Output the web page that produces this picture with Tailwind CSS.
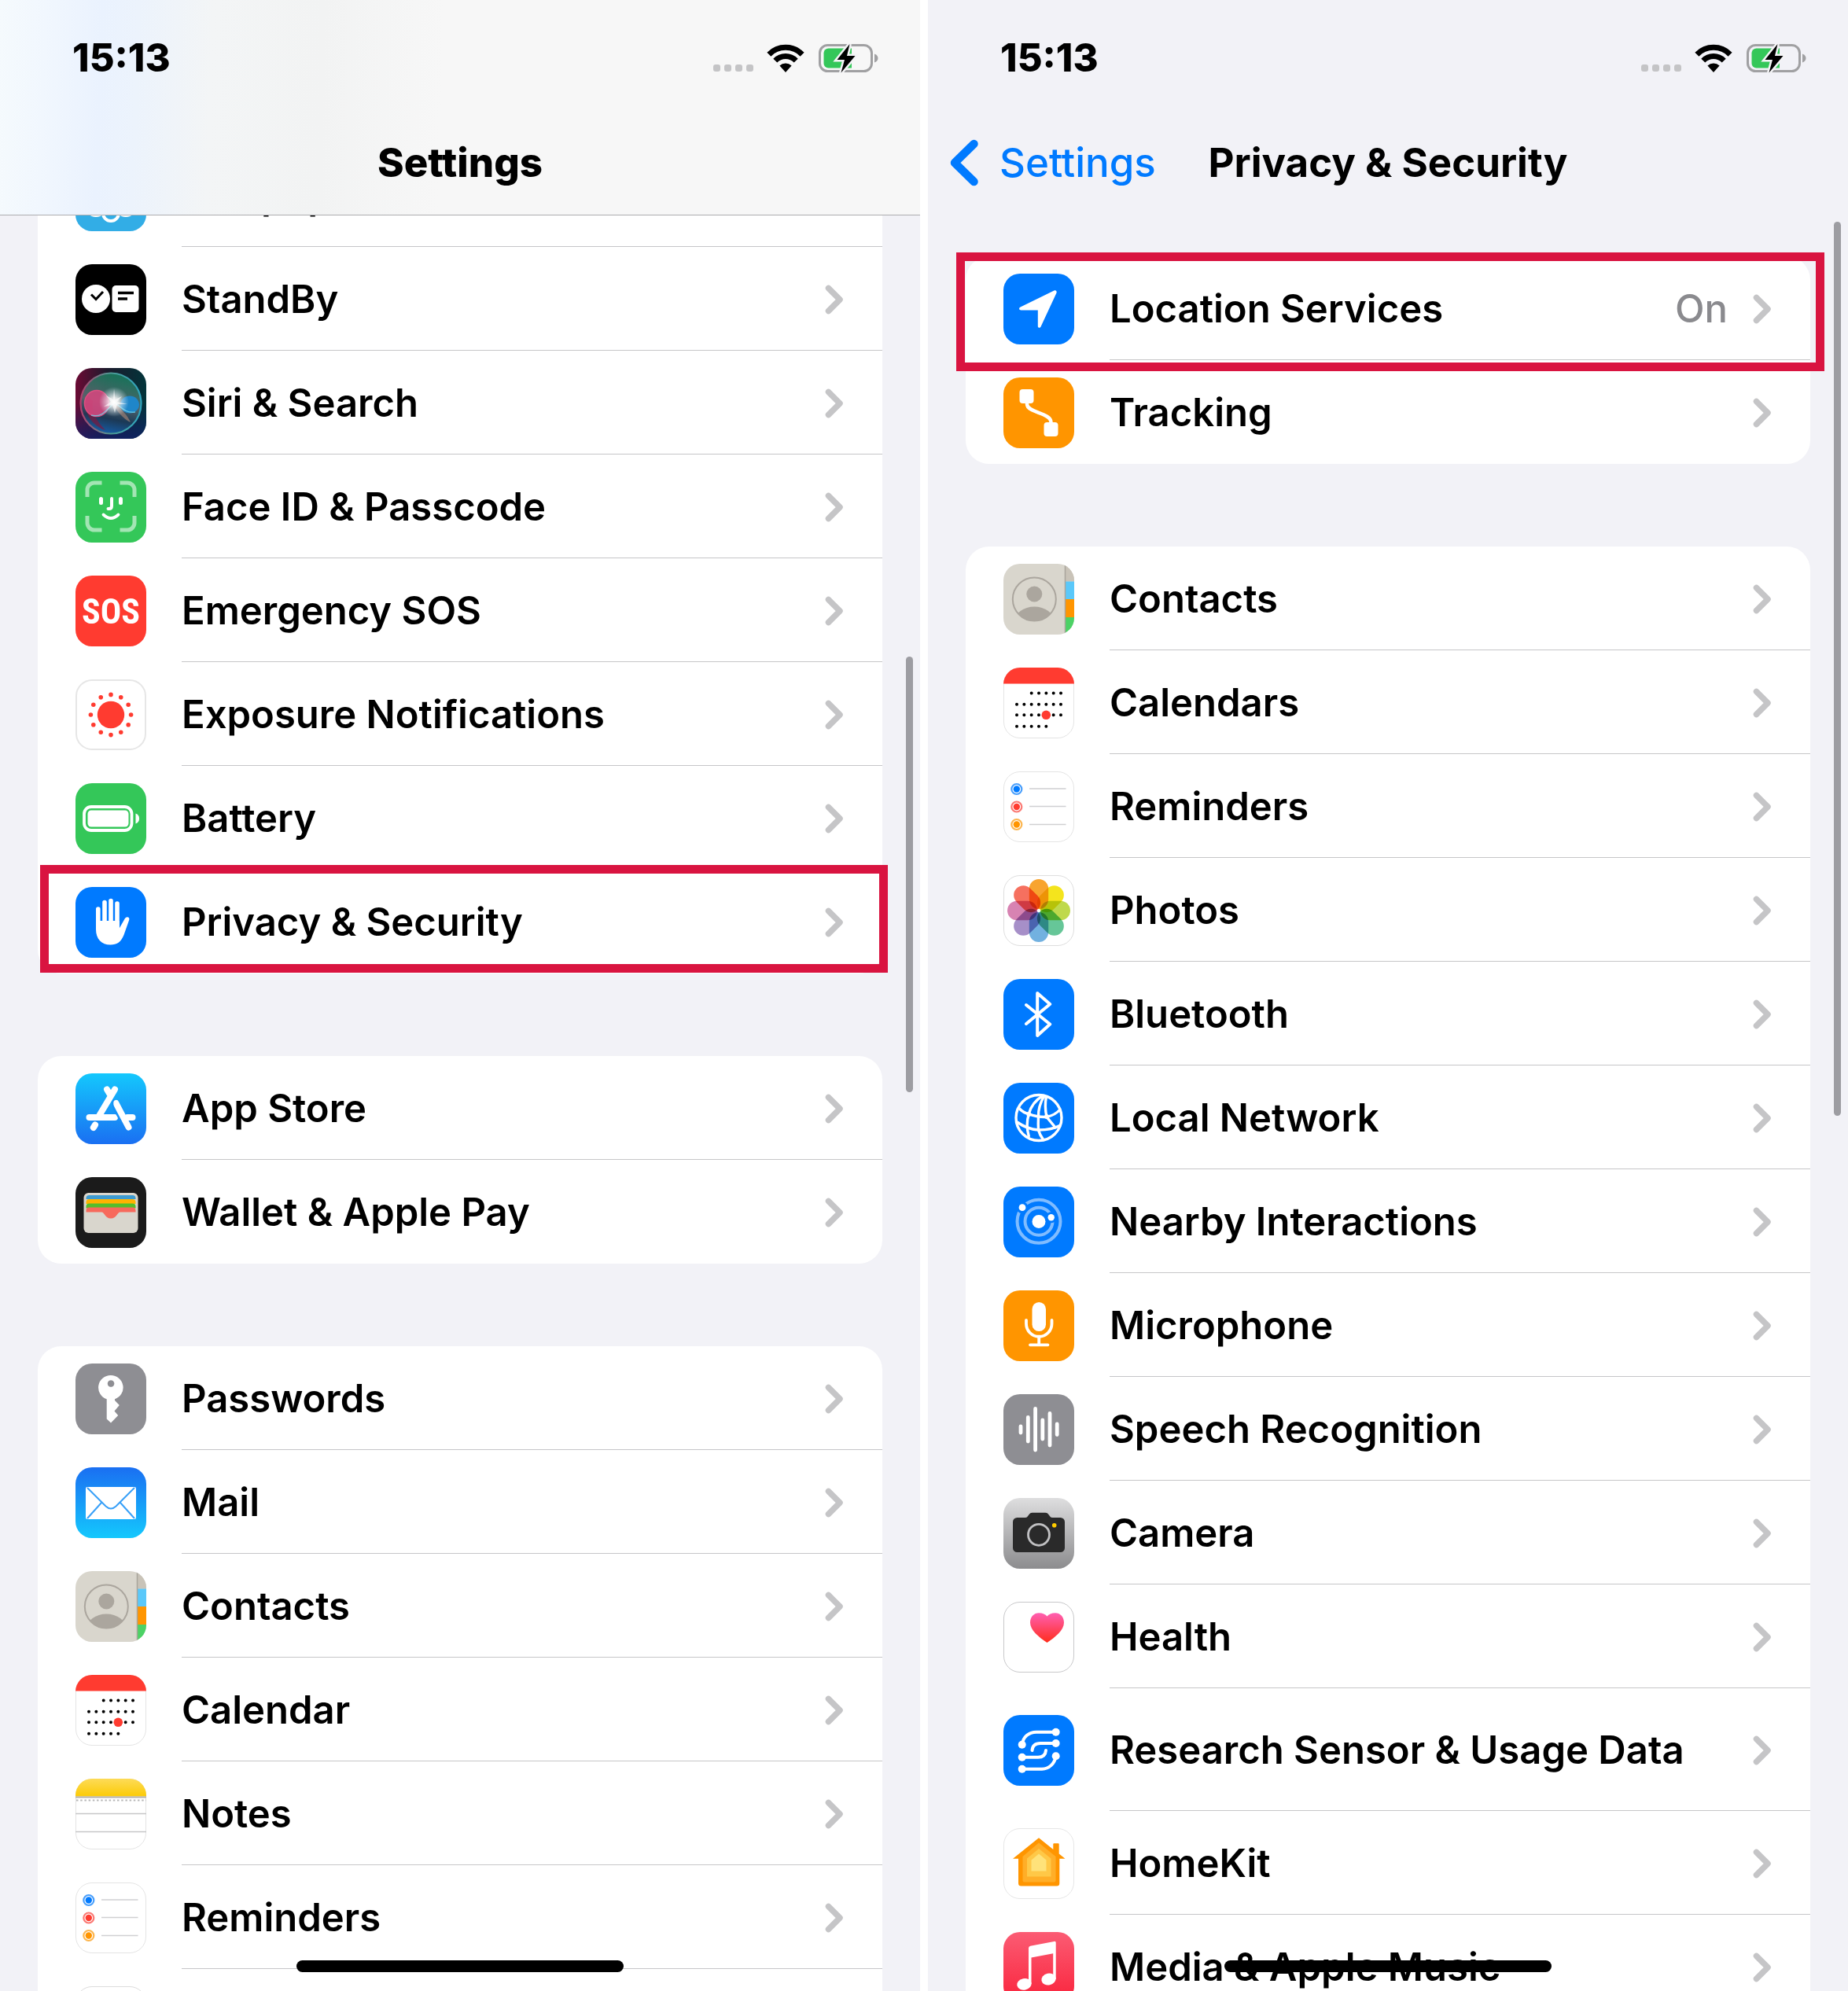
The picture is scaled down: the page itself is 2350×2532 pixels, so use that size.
<!DOCTYPE html>
<html lang="en">
<head>
  <meta charset="UTF-8">
  <meta name="viewport" content="width=device-width, initial-scale=1.0">
  <title>Settings</title>
  <script src="https://cdn.jsdelivr.net/npm/@tailwindcss/browser@4"></script>
</head>
<body class="bg-white font-['Inter','Liberation_Sans',sans-serif] text-black">

  <!-- Icon sprite, every app icon is drawn on a 90x90 tile -->
  <svg class="absolute h-0 w-0" aria-hidden="true">
    <defs>
      <clipPath id="tile"><rect width="90" height="90" rx="21"/></clipPath>
      <clipPath id="contact-ring"><circle cx="39.3" cy="45" r="27.5"/></clipPath>
      <linearGradient id="g-siri" x1="0" y1="0" x2="1" y2="0"><stop offset="0" stop-color="#6b0a34"/><stop offset=".45" stop-color="#1c1a2c"/><stop offset="1" stop-color="#02343a"/></linearGradient>
      <linearGradient id="g-siri-low" x1="0" y1="0" x2="0" y2="1"><stop offset=".5" stop-color="#10206a" stop-opacity="0"/><stop offset="1" stop-color="#10206a" stop-opacity=".8"/></linearGradient>
      <linearGradient id="g-siri-orb" x1=".6" y1="0" x2=".4" y2="1"><stop offset="0" stop-color="#16805f"/><stop offset=".5" stop-color="#5b6d74"/><stop offset=".75" stop-color="#1d3d58"/><stop offset="1" stop-color="#1668b4"/></linearGradient>
      <linearGradient id="g-siri-ring" x1="0" y1=".5" x2="1" y2=".5"><stop offset="0" stop-color="#b0406e"/><stop offset=".5" stop-color="#4c9a94"/><stop offset="1" stop-color="#2fa6c0"/></linearGradient>
      <radialGradient id="g-siri-glow"><stop offset="0" stop-color="#fff"/><stop offset=".3" stop-color="#fff" stop-opacity=".8"/><stop offset="1" stop-color="#cfe8f5" stop-opacity="0"/></radialGradient>
      <linearGradient id="g-store" x2="0" y2="1"><stop offset="0" stop-color="#14c8fd"/><stop offset="1" stop-color="#1a6ff2"/></linearGradient>
      <linearGradient id="g-mail" x2="0" y2="1"><stop offset="0" stop-color="#1a6ff2"/><stop offset="1" stop-color="#14c8fd"/></linearGradient>
      <linearGradient id="g-notes" x2="0" y2="1"><stop offset="0" stop-color="#fddb58"/><stop offset="1" stop-color="#fccb05"/></linearGradient>
      <linearGradient id="g-camera" x2="0" y2="1"><stop offset="0" stop-color="#dededf"/><stop offset="1" stop-color="#8c8c8e"/></linearGradient>
      <linearGradient id="g-heart" x2="0" y2="1"><stop offset="0" stop-color="#ff5fb2"/><stop offset="1" stop-color="#ff2d1c"/></linearGradient>
      <linearGradient id="g-music" x2="0" y2="1"><stop offset="0" stop-color="#fb5c74"/><stop offset="1" stop-color="#fa233b"/></linearGradient>
    </defs>

    <symbol id="chevron" viewBox="0 0 24 38">
      <path d="M4.5 4.5 19 19 4.5 33.5" fill="none" stroke="#c5c5c7" stroke-width="7.5" stroke-linecap="round" stroke-linejoin="round"/>
    </symbol>
    <symbol id="back" viewBox="0 0 38 60">
      <path d="M31.5 6 7 30 31.5 54" fill="none" stroke="#007aff" stroke-width="10.5" stroke-linecap="round" stroke-linejoin="round"/>
    </symbol>
    <symbol id="wifi" viewBox="0 0 48 36">
      <g fill="none" stroke="#000" stroke-width="7">
        <path d="M2.9 13.2A29.5 29.5 0 0 1 45.1 13.2"/>
        <path d="M10.8 21.1A18.4 18.4 0 0 1 37.2 21.1"/>
      </g>
      <path d="M24 36 16.4 27.6A11 11 0 0 1 31.6 27.6Z"/>
    </symbol>
    <symbol id="charging" viewBox="0 0 76 38">
      <rect x="1.5" y="2.5" width="66" height="33" rx="10" fill="none" stroke="#a0a0a2" stroke-width="3"/>
      <path d="M71 13.5c3 1 4.5 3.2 4.500 5.500s-1.500 4.500-4.500 5.500z" fill="#a0a0a2"/>
      <path d="M12.500 6.500H42v25H12.500a6 6 0 0 1-6-6v-13a6 6 0 0 1 6-6z" fill="#34c759"/>
      <path d="M39.500 1 23.500 21H33l-4.500 16.500L46.500 16H36z" stroke="#f4f4f6" stroke-width="5" paint-order="stroke"/>
    </symbol>

    <symbol id="wallpaper" viewBox="0 0 90 90">
      <rect width="90" height="90" rx="21" fill="#32ade6"/>
      <g fill="none" stroke="#fff" stroke-width="4">
        <circle cx="45" cy="45" r="9"/><circle cx="45" cy="67" r="10"/><circle cx="45" cy="23" r="10"/>
        <circle cx="64" cy="58" r="12"/><circle cx="26" cy="58" r="12"/><circle cx="64" cy="34" r="12"/><circle cx="26" cy="34" r="12"/>
      </g>
    </symbol>
    <symbol id="standby" viewBox="0 0 90 90">
      <rect width="90" height="90" rx="21"/>
      <circle cx="26" cy="44" r="18" fill="#fff"/>
      <path d="M20 38.500 26 44.500 35 35" fill="none" stroke="#000" stroke-width="3"/>
      <rect x="46.500" y="27" width="34" height="34" rx="5" fill="#fff"/>
      <path d="M54 36.500H74M54 44H66" stroke="#000" stroke-width="3.500"/>
    </symbol>
    <symbol id="siri" viewBox="0 0 90 90">
      <rect width="90" height="90" rx="21" fill="url(#g-siri)"/>
      <rect width="90" height="90" rx="21" fill="url(#g-siri-low)"/>
      <circle cx="45" cy="45" r="38" fill="url(#g-siri-orb)" opacity=".85"/>
      <path d="M14 34C8 52 18 72 38 79 26 66 20 56 22 42z" fill="#7a1840" opacity=".7"/>
      <ellipse cx="27" cy="45" rx="15.500" ry="16.500" fill="#d2487e" stroke="#ef4f86" stroke-width="1.500" opacity=".9"/>
      <ellipse cx="69" cy="46.500" rx="12" ry="11" fill="#1f86c9"/>
      <path d="M46 40C58 52 66 60 70 69 62 66 54 56 48 47z" fill="#9b7f74" opacity=".7"/>
      <path d="M20 60C34 64 40 52 50 44 60 52 66 58 76 56" fill="none" stroke="#6fd0e6" stroke-width="1.500" opacity=".8"/>
      <circle cx="49" cy="43" r="19" fill="url(#g-siri-glow)"/>
      <path d="M49 26 50.500 40 59 36 53 43 66 46 53 46 50 57 47 47 36 49 45 43 39 35 48 40z" fill="#fff" opacity=".6"/>
      <circle cx="45" cy="45" r="38.500" fill="none" stroke="url(#g-siri-ring)" stroke-width="2.200"/>
    </symbol>
    <symbol id="faceid" viewBox="0 0 90 90">
      <rect width="90" height="90" rx="21" fill="#34c759"/>
      <path d="M15 32V23a9 9 0 0 1 9-9H33.500M56.500 14H66a9 9 0 0 1 9 9V32M75 56V65a9 9 0 0 1-9 9H56.500M33.500 74H24a9 9 0 0 1-9-9V56" fill="none" stroke="#a3e5b4" stroke-width="5"/>
      <g fill="none" stroke="#fff" stroke-linecap="round">
        <path d="M32.500 34.500V39.500M57.500 34.500V39.500" stroke-width="5"/>
        <path d="M46 34V43.500Q46 47 42.500 47H41.500" stroke-width="4"/>
        <path d="M35.500 54.500Q45 63.500 54.500 54.500" stroke-width="3.800"/>
      </g>
    </symbol>
    <symbol id="sos" viewBox="0 0 90 90">
      <rect width="90" height="90" rx="21" fill="#ff3b30"/>
      <text x="45" y="61" text-anchor="middle" fill="#fff" class="font-['Liberation_Sans_Narrow','Roboto_Condensed','Roboto',sans-serif] text-[44px] font-bold">SOS</text>
    </symbol>
    <symbol id="exposure" viewBox="0 0 90 90">
      <rect x="1" y="1" width="88" height="88" rx="20" fill="#fff" stroke="#e6e6e6" stroke-width="2"/>
      <circle cx="45" cy="45" r="17.200" fill="#ff3b30"/>
      <circle cx="45" cy="45" r="25.600" fill="none" stroke="#ff3b30" stroke-width="5.600" stroke-linecap="round" pathLength="120" stroke-dasharray="0 10"/>
    </symbol>
    <symbol id="battery" viewBox="0 0 90 90">
      <rect width="90" height="90" rx="21" fill="#34c759"/>
      <rect x="11" y="30" width="60.500" height="30" rx="9" fill="none" stroke="#fff" stroke-width="3.800"/>
      <rect x="15.500" y="34.500" width="52" height="21" rx="4.500" fill="#fff"/>
      <path d="M76.500 38.500c3 .8 4.600 3.500 4.600 6.500s-1.600 5.700-4.600 6.500z" fill="#fff"/>
    </symbol>
    <symbol id="hand" viewBox="0 0 90 90">
      <rect width="90" height="90" rx="21" fill="#007aff"/>
      <path d="M28.800 28V50M37 19.500V48M45 17.500V48M53 21V52" fill="none" stroke="#fff" stroke-width="5.600" stroke-linecap="round"/>
      <path d="M26 43H55.800V52.500L62.600 40.500C65 36.500 69.500 38.500 68.200 42L61.500 61C58 70 52.500 73.500 44.500 73.500 33 73.500 26 66 26 54z" fill="#fff"/>
    </symbol>
    <symbol id="appstore" viewBox="0 0 90 90">
      <rect width="90" height="90" rx="21" fill="url(#g-store)"/>
      <g fill="none" stroke="#fff" stroke-width="8" stroke-linecap="round">
        <path d="M17.500 56H50M50 20.500 30 54M40 20.500 44.500 28M66 56H72.500M25 65.500 22.800 69"/>
        <path d="M51.500 38 67.500 68.500"/>
      </g>
      <path d="M48.500 33C46 39 47.500 44 52 51.500L58 62" fill="none" stroke="#168ff7" stroke-width="1.600"/>
    </symbol>
    <symbol id="wallet" viewBox="0 0 90 90">
      <rect width="90" height="90" rx="21" fill="#1b1b1b"/>
      <rect x="10.500" y="20" width="69" height="51" rx="6" fill="#d9d6cd"/>
      <path d="M13.500 28v-1a4 4 0 0 1 4-4h55a4 4 0 0 1 4 4v1z" fill="#3d9bd0"/>
      <path d="M13.500 34v-2a4 4 0 0 1 4-4h55a4 4 0 0 1 4 4v2z" fill="#ffb300"/>
      <path d="M13.500 39.500v-2a4 4 0 0 1 4-4h55a4 4 0 0 1 4 4v2z" fill="#55be2b"/>
      <path d="M13.500 44.500v-2a4 4 0 0 1 4-4h55a4 4 0 0 1 4 4v2H57c-4 0-4.500 8-12 8s-8-8-12-8z" fill="#f76a5c"/>
    </symbol>
    <symbol id="key" viewBox="0 0 90 90">
      <rect width="90" height="90" rx="21" fill="#8e8e93"/>
      <path fill-rule="evenodd" d="M45 15a15.500 15.500 0 0 1 5 30.200V47L55.800 53 49.500 60.500 54.200 66 45 75.500 39.700 70.500V45.200A15.500 15.500 0 0 1 45 15zM45 21.200a4.300 4.300 0 1 0 .1 0z" fill="#fff"/>
    </symbol>
    <symbol id="mail" viewBox="0 0 90 90">
      <rect width="90" height="90" rx="21" fill="url(#g-mail)"/>
      <rect x="13" y="25" width="64" height="41" rx="2" fill="#fff"/>
      <path d="M15 26 38.500 49.500Q45 55.500 51.500 49.500L75 26M15 65 33 45M75 65 57 45" fill="none" stroke="#38a0f8" stroke-width="2"/>
    </symbol>
    <symbol id="contacts" viewBox="0 0 90 90">
      <g clip-path="url(#tile)">
        <rect width="90" height="90" fill="#d9d6cd"/>
        <rect x="78.500" width="12" height="22.500" fill="#c9c3b8"/>
        <rect x="78.500" y="22.500" width="12" height="22.500" fill="#5ac8fa"/>
        <rect x="78.500" y="45" width="12" height="23" fill="#ff9500"/>
        <rect x="78.500" y="68" width="12" height="22" fill="#4cd265"/>
        <path d="M78.500 0V90" stroke="#a9a59c" stroke-width="1.500"/>
      </g>
      <circle cx="39.300" cy="45" r="27.500" fill="none" stroke="#aba69e" stroke-width="2"/>
      <circle cx="39.300" cy="38.500" r="10" fill="#aba69e"/>
      <ellipse cx="39.300" cy="73" rx="25" ry="18.500" fill="#aba69e" clip-path="url(#contact-ring)"/>
    </symbol>
    <symbol id="calendar" viewBox="0 0 90 90">
      <rect x=".5" y=".5" width="89" height="89" rx="20.500" fill="#fff" stroke="#e4e4e4"/>
      <rect width="90" height="20.500" fill="#ff3b30" clip-path="url(#tile)"/>
      <g fill="none" stroke="#000" stroke-width="4" stroke-linecap="round" stroke-dasharray="0 9.330">
        <path d="M35.700 32.400H73.100M17 46.800H73.100M17 60.300H73.100M17 74.700H54.400"/>
      </g>
      <circle cx="54.300" cy="60.300" r="5.800" fill="#ff3b30"/>
    </symbol>
    <symbol id="notes" viewBox="0 0 90 90">
      <rect x=".5" y=".5" width="89" height="89" rx="20.500" fill="#fff" stroke="#e4e4e4"/>
      <rect width="90" height="22.500" fill="url(#g-notes)" clip-path="url(#tile)"/>
      <path d="M0 23.500H90" stroke="#b4b0a8" stroke-width="2"/>
      <path d="M1 27.500H90" stroke="#b8b8b8" stroke-width="2" stroke-dasharray="2.500 2.700"/>
      <path d="M0 44.500H90M0 67.500H90" stroke="#c6c6c8" stroke-width="1.500"/>
    </symbol>
    <symbol id="reminders" viewBox="0 0 90 90">
      <rect x=".5" y=".5" width="89" height="89" rx="20.500" fill="#fff" stroke="#e4e4e4"/>
      <g stroke-width="2.200">
        <circle cx="16.800" cy="22.500" r="6.500" fill="#fff" stroke="#4a9ffb"/><circle cx="16.800" cy="22.500" r="4.200" fill="#007aff"/>
        <circle cx="16.800" cy="45" r="6.500" fill="#fff" stroke="#fb7a74"/><circle cx="16.800" cy="45" r="4.200" fill="#ff3b30"/>
        <circle cx="16.800" cy="67.500" r="6.500" fill="#fff" stroke="#fcb650"/><circle cx="16.800" cy="67.500" r="4.200" fill="#ff9500"/>
      </g>
      <path d="M33 22H79.500M33 44.500H79.500M33 67.500H79.500" stroke="#d0d0d2" stroke-width="1.500"/>
    </symbol>
    <symbol id="blank" viewBox="0 0 90 90">
      <rect x=".5" y=".5" width="89" height="89" rx="20.500" fill="#fff" stroke="#dcdcdc"/>
    </symbol>
    <symbol id="photos" viewBox="0 0 90 90">
      <rect x=".5" y=".5" width="89" height="89" rx="20.500" fill="#fff" stroke="#dedede"/>
      <g transform="translate(45 45)">
        <rect class="mix-blend-multiply" x="-12.200" y="-40" width="24.400" height="38" rx="12.200" fill="#f8a42f"/>
        <rect class="mix-blend-multiply" x="-12.200" y="-40" width="24.400" height="38" rx="12.200" fill="#f4e41d" transform="rotate(45)"/>
        <rect class="mix-blend-multiply" x="-12.200" y="-40" width="24.400" height="38" rx="12.200" fill="#bfd94c" transform="rotate(90)"/>
        <rect class="mix-blend-multiply" x="-12.200" y="-40" width="24.400" height="38" rx="12.200" fill="#66c698" transform="rotate(135)"/>
        <rect class="mix-blend-multiply" x="-12.200" y="-40" width="24.400" height="38" rx="12.200" fill="#72b1e0" transform="rotate(180)"/>
        <rect class="mix-blend-multiply" x="-12.200" y="-40" width="24.400" height="38" rx="12.200" fill="#a68fc8" transform="rotate(225)"/>
        <rect class="mix-blend-multiply" x="-12.200" y="-40" width="24.400" height="38" rx="12.200" fill="#d783b2" transform="rotate(270)"/>
        <rect class="mix-blend-multiply" x="-12.200" y="-40" width="24.400" height="38" rx="12.200" fill="#f6705f" transform="rotate(315)"/>
      </g>
    </symbol>
    <symbol id="location" viewBox="0 0 90 90">
      <rect width="90" height="90" rx="21" fill="#007aff"/>
      <path d="M64.500 21.500c2-.9 3.800.8 3 2.900L47.500 67.500c-1 2-3.700 1.500-3.700-.8V46.500H22.500c-2.800 0-3.300-2.900-.9-4z" fill="#fff"/>
    </symbol>
    <symbol id="tracking" viewBox="0 0 90 90">
      <rect width="90" height="90" rx="21" fill="#ff9500"/>
      <rect x="20.500" y="15" width="18" height="18" rx="4" fill="#fff"/>
      <rect x="51.500" y="57" width="18" height="18" rx="4" fill="#fff"/>
      <path d="M30 32V34C30 45 60.500 45 60.500 57" fill="none" stroke="#fff" stroke-width="4.500"/>
    </symbol>
    <symbol id="bluetooth" viewBox="0 0 90 90">
      <rect width="90" height="90" rx="21" fill="#007aff"/>
      <path d="M29 33 59.200 57.500 43.200 72V18L59.200 32 29 57" fill="none" stroke="#fff" stroke-width="4" stroke-linecap="round" stroke-linejoin="round"/>
    </symbol>
    <symbol id="network" viewBox="0 0 90 90">
      <rect width="90" height="90" rx="21" fill="#007aff"/>
      <g fill="none" stroke="#fff" stroke-width="3.400">
        <circle cx="45" cy="44.500" r="29"/>
        <path d="M20 32.500Q25 38 32.300 39.700 43 44 55 43.500 66 41 72 34"/>
        <path d="M50 16.500Q36 25 32.300 39.700 28 53 32.500 69M52 16.500Q44 30 44.500 43 44 52 44.500 60 46 66 50.500 72M54.500 17.500Q52 30 55 43.500L67 58"/>
        <path d="M17.500 50Q30 59 44.500 60 62 60 72.500 54"/>
      </g>
      <circle cx="32.300" cy="40" r="3" fill="#fff"/><circle cx="55" cy="43" r="3" fill="#fff"/>
    </symbol>
    <symbol id="nearby" viewBox="0 0 90 90">
      <rect width="90" height="90" rx="21" fill="#007aff"/>
      <g fill="none" stroke="#80bcff" stroke-width="4">
        <circle cx="45" cy="44.300" r="17.500"/><circle cx="45" cy="44.300" r="27.500"/>
      </g>
      <circle cx="60.700" cy="39.300" r="7" fill="#007aff"/><circle cx="24" cy="26.700" r="7.500" fill="#007aff"/>
      <circle cx="45" cy="44.500" r="8.500" fill="#fff"/><circle cx="60.700" cy="39.300" r="4.200" fill="#fff"/><circle cx="24" cy="26.700" r="4.400" fill="#fff"/>
    </symbol>
    <symbol id="microphone" viewBox="0 0 90 90">
      <rect width="90" height="90" rx="21" fill="#ff9500"/>
      <rect x="36.500" y="15" width="17.500" height="37" rx="8.750" fill="#fff"/>
      <path d="M29 38V42.500a16.200 16.200 0 0 0 32.500 0V38M45.200 59V69M34 69.300H56.500" fill="none" stroke="#fff" stroke-width="3.800" stroke-linecap="round"/>
    </symbol>
    <symbol id="speech" viewBox="0 0 90 90">
      <rect width="90" height="90" rx="21" fill="#8e8e93"/>
      <path d="M22 41V49M31.300 29.500V60M40.600 18.500V71M49.800 33V57M59 24.500V65M68.200 38V51.500" fill="none" stroke="#fff" stroke-width="4.800" stroke-linecap="round"/>
    </symbol>
    <symbol id="camera" viewBox="0 0 90 90">
      <rect width="90" height="90" rx="21" fill="url(#g-camera)"/>
      <path d="M17.500 25H28Q30 25 31.500 22.500L33 20.500Q34 18.800 36.500 18.800H53.500Q56 18.800 57 20.500L58.500 22.500Q60 25 62 25H72.500a5.500 5.500 0 0 1 5.500 5.500V63.500a5.500 5.500 0 0 1-5.500 5.500H17.500a5.500 5.500 0 0 1-5.500-5.500V30.500a5.500 5.500 0 0 1 5.500-5.500z" fill="#2a2a2a"/>
      <circle cx="45" cy="46.800" r="13.500" fill="none" stroke="#c0c0c2" stroke-width="2.800"/>
      <circle cx="64.700" cy="34.700" r="2.800" fill="#ffcc00"/>
    </symbol>
    <symbol id="health" viewBox="0 0 90 90">
      <rect x=".5" y=".5" width="89" height="89" rx="20.500" fill="#fff" stroke="#c8c8ca"/>
      <path d="M55.500 52C45 45 34 36 34 26.500 34 19 39 14.300 45 14.300 50 14.300 53.500 16 55.500 18.500 57.500 16 61 14.300 66 14.300 72 14.300 77 19 77 26.500 77 36 66 45 55.500 52z" fill="url(#g-heart)"/>
    </symbol>
    <symbol id="research" viewBox="0 0 90 90">
      <rect width="90" height="90" rx="21" fill="#007aff"/>
      <path d="M66.700 21.700H42C32 21.700 25 28 23.700 37.700M66.700 36H47C40 36 37 39 36.500 45M23.700 53.700H44C50 53.700 53.500 51 54 45M23.700 68.700H49C58 68.700 65 62 66.700 52.300" fill="none" stroke="#fff" stroke-width="4" stroke-linecap="round"/>
      <g fill="#fff">
        <circle cx="66.700" cy="21.700" r="5"/><circle cx="23.700" cy="37.700" r="5"/><circle cx="66.700" cy="36" r="5"/>
        <circle cx="23.700" cy="53.700" r="5"/><circle cx="66.700" cy="52.300" r="5"/><circle cx="23.700" cy="68.700" r="5"/>
      </g>
    </symbol>
    <symbol id="homekit" viewBox="0 0 90 90">
      <rect x=".5" y=".5" width="89" height="89" rx="20.500" fill="#fff" stroke="#e6e6e6"/>
      <path d="M45 12.300 63.300 27V20.300q0-1 1-1h5.400q1 0 1 1V32.500L78.500 38.700H71.300V70a3.500 3.500 0 0 1-3.500 3.500H22.500A3.500 3.500 0 0 1 19 70V38.700H12z" fill="#ff9500"/>
      <path d="M45 18.500 66.500 36V66.500q0 2-2 2H26.500q-2 0-2-2V36z" fill="#ffae28"/>
      <path d="M45 26 60.500 38.500V61.500H30V38.500z" fill="#ffc847"/>
      <path d="M45 32.500 54.500 40.500V54.500H35.500V40.500z" fill="#ffe27a"/>
    </symbol>
    <symbol id="music" viewBox="0 0 90 90">
      <rect width="90" height="90" rx="21" fill="url(#g-music)"/>
      <path d="M32 20.500q0-2.200 2.200-2.700L64.500 11.900q2.200-.4 2.200 1.700V60H63.200V27.300L35.500 32.500V66H32z" fill="#fff"/>
      <ellipse cx="57.500" cy="60" rx="9.200" ry="7.300" fill="#fff" transform="rotate(-12 57.500 60)"/>
      <ellipse cx="26.500" cy="66.300" rx="9.200" ry="7.300" fill="#fff" transform="rotate(-12 26.500 66.300)"/>
    </symbol>
  </svg>

  <div class="grid h-screen grid-cols-2 gap-[10px] overflow-hidden">

    <!-- Settings -->
    <section class="relative flex min-h-0 flex-col overflow-hidden bg-[#f2f2f7]">
      <header class="relative z-10 flex h-[274px] shrink-0 flex-col border-b border-[#adadb0] bg-[linear-gradient(92deg,#f5fafd_0%,#f1f7fe_5%,#eaf2fe_11%,#ecf3fc_15%,#f3f5f6_23%,#f2f3f3_35%,#f7f7f7_48%)]">
        <div class="status flex h-[148px] items-center justify-between pr-[53px] pl-[92px]"></div>
        <h1 class="flex h-[118px] items-center justify-center text-[51px] font-extrabold">Settings</h1>
      </header>
      <main class="-mt-[92px] flex flex-col gap-[105px] px-12">
        <ul id="system" class="rounded-[30px] bg-white"></ul>
        <ul id="store" class="rounded-[30px] bg-white"></ul>
        <ul id="apps" class="rounded-[30px] bg-white"></ul>
      </main>
      <div class="absolute top-[835px] right-[9px] h-[554px] w-[9px] rounded-full bg-[#9d9da2]"></div>
      <div class="absolute bottom-6 left-1/2 h-[15px] w-[416px] -translate-x-1/2 rounded-full bg-black"></div>
    </section>

    <!-- Privacy & Security -->
    <section class="relative flex min-h-0 flex-col overflow-hidden bg-[#f2f2f7]">
      <header class="flex h-[326px] shrink-0 flex-col">
        <div class="status flex h-[148px] items-center justify-between pr-[53px] pl-[92px]"></div>
        <div class="grid h-[118px] grid-cols-[1fr_auto_1fr] items-center text-[51px]">
          <a href="#" class="flex items-center gap-[26px] pl-[27px] font-medium text-[#007aff]">
            <svg class="h-[60px] w-[38px]"><use href="#back"/></svg>Settings
          </a>
          <h1 class="font-bold">Privacy &amp; Security</h1>
        </div>
      </header>
      <main class="flex flex-col gap-[105px] px-12">
        <ul id="tracking-list" class="rounded-[30px] bg-white"></ul>
        <ul id="permissions" class="rounded-[30px] bg-white"></ul>
      </main>
      <div class="absolute top-[282px] right-[9px] h-[1137px] w-[9px] rounded-full bg-[#9d9da2]"></div>
      <div class="absolute bottom-6 left-1/2 h-[15px] w-[416px] -translate-x-1/2 rounded-full bg-black"></div>
    </section>
  </div>

  <script>
    const lists = {
      system: [
        { icon: 'wallpaper', label: 'Wallpaper' },
        { icon: 'standby', label: 'StandBy' },
        { icon: 'siri', label: 'Siri & Search' },
        { icon: 'faceid', label: 'Face ID & Passcode' },
        { icon: 'sos', label: 'Emergency SOS' },
        { icon: 'exposure', label: 'Exposure Notifications' },
        { icon: 'battery', label: 'Battery' },
        { icon: 'hand', label: 'Privacy & Security', marker: '-top-[6px] -right-[7px] bottom-px left-[3px]' }
      ],
      store: [
        { icon: 'appstore', label: 'App Store' },
        { icon: 'wallet', label: 'Wallet & Apple Pay' }
      ],
      apps: [
        { icon: 'key', label: 'Passwords' },
        { icon: 'mail', label: 'Mail' },
        { icon: 'contacts', label: 'Contacts' },
        { icon: 'calendar', label: 'Calendar' },
        { icon: 'notes', label: 'Notes' },
        { icon: 'reminders', label: 'Reminders' },
        { icon: 'blank', label: '' }
      ],
      'tracking-list': [
        { icon: 'location', label: 'Location Services', value: 'On', marker: '-top-[5px] -right-[18px] -bottom-[14px] -left-[12px]' },
        { icon: 'tracking', label: 'Tracking' }
      ],
      permissions: [
        { icon: 'contacts', label: 'Contacts' },
        { icon: 'calendar', label: 'Calendars' },
        { icon: 'reminders', label: 'Reminders' },
        { icon: 'photos', label: 'Photos' },
        { icon: 'bluetooth', label: 'Bluetooth' },
        { icon: 'network', label: 'Local Network' },
        { icon: 'nearby', label: 'Nearby Interactions' },
        { icon: 'microphone', label: 'Microphone' },
        { icon: 'speech', label: 'Speech Recognition' },
        { icon: 'camera', label: 'Camera' },
        { icon: 'health', label: 'Health' },
        { icon: 'research', label: 'Research Sensor & Usage Data', height: 'h-[156px]' },
        { icon: 'homekit', label: 'HomeKit' },
        { icon: 'music', label: 'Media & Apple Music' }
      ]
    };

    function row(item, isLast) {
      return `
        <li class="relative">
          <a href="#" class="flex items-center pl-12 ${item.height || 'h-[132px]'}">
            <svg class="mt-[2px] mr-[45px] size-[90px] shrink-0"><use href="#${item.icon}"/></svg>
            <span class="flex h-full grow items-center gap-[32px] pt-[2px] pr-[49px] ${isLast ? '' : 'border-b border-[#c6c6c8]'}">
              <span class="grow text-[49px] font-semibold whitespace-nowrap">${item.label.replace('&', '&amp;')}</span>
              ${item.value ? `<span class="text-[49px] font-medium text-[#8a8a8e]">${item.value}</span>` : ''}
              <svg class="h-[38px] w-6 shrink-0"><use href="#chevron"/></svg>
            </span>
          </a>
          ${item.marker ? `<div class="pointer-events-none absolute z-10 border-[11px] border-[#d91440] ${item.marker}"></div>` : ''}
        </li>`;
    }

    Object.keys(lists).forEach(id => {
      const items = lists[id];
      document.getElementById(id).innerHTML = items.map((item, i) => row(item, i === items.length - 1)).join('');
    });

    document.querySelectorAll('.status').forEach(bar => {
      bar.innerHTML = `
        <span class="text-[49px] font-extrabold">15:13</span>
        <div class="flex items-center">
          <div class="mt-6 mr-[17px] flex gap-[5px]">
            <span class="h-[9px] w-[9px] rounded-[3px] bg-[#c4c4c6]"></span>
            <span class="h-[9px] w-[9px] rounded-[3px] bg-[#c4c4c6]"></span>
            <span class="h-[9px] w-[9px] rounded-[3px] bg-[#c4c4c6]"></span>
            <span class="h-[9px] w-[9px] rounded-[3px] bg-[#c4c4c6]"></span>
          </div>
          <svg class="mr-[18px] h-9 w-12"><use href="#wifi"/></svg>
          <svg class="h-[38px] w-[76px]"><use href="#charging"/></svg>
        </div>`;
    });
  </script>
</body>
</html>
